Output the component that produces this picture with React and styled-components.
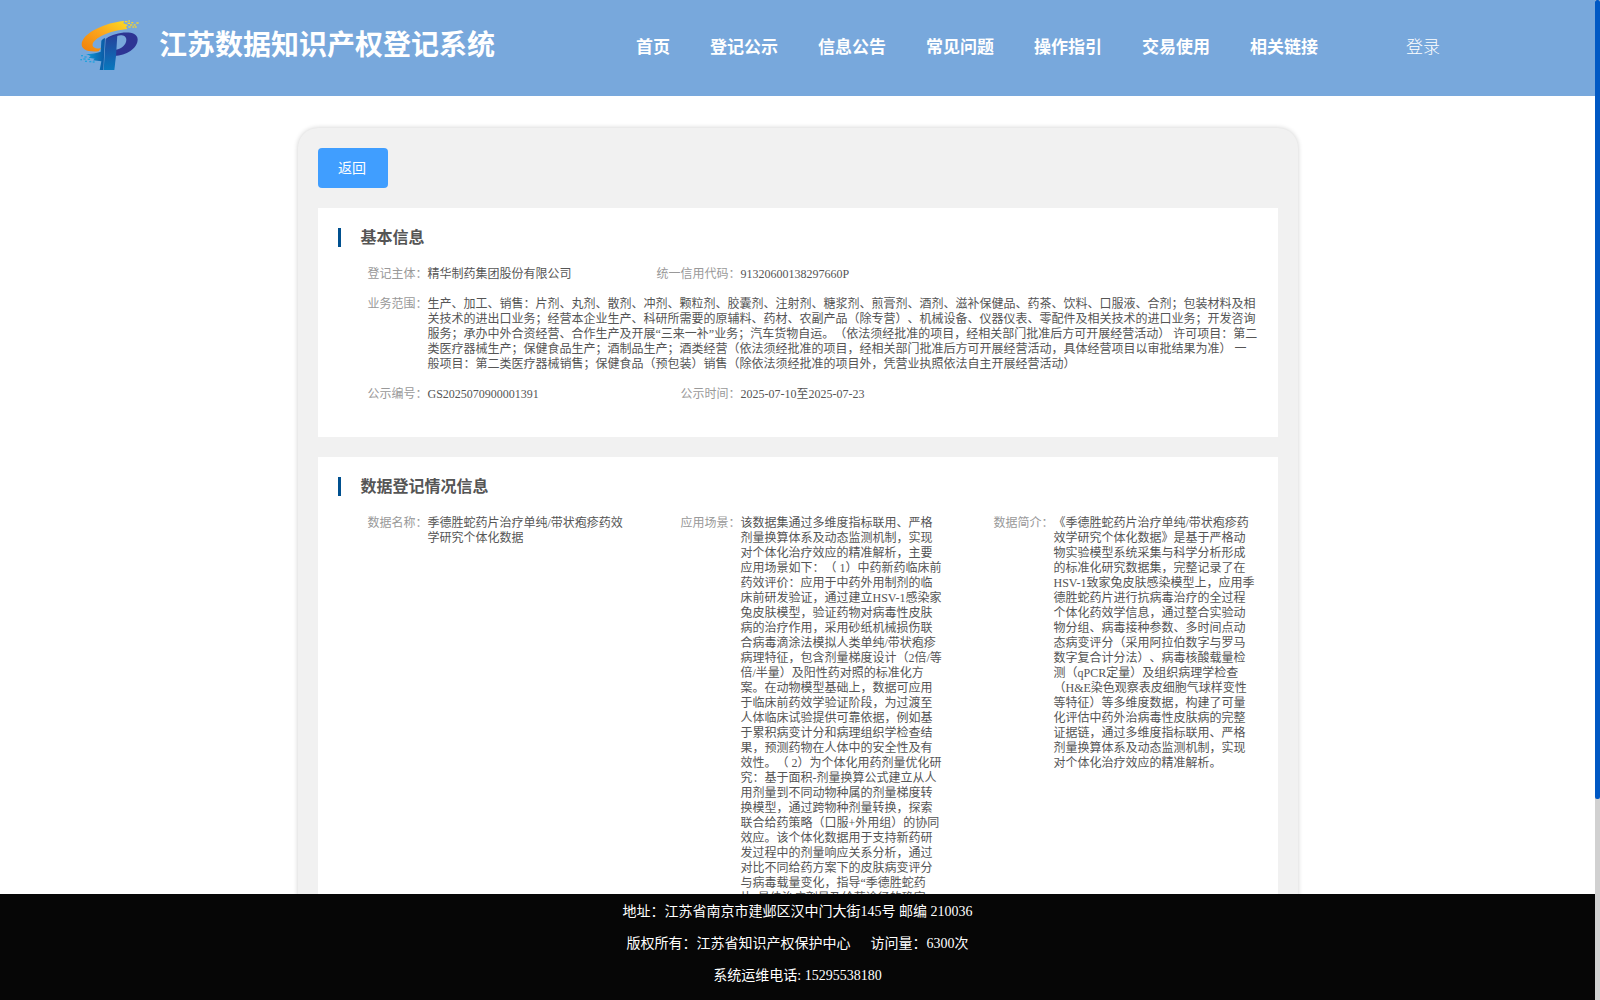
import React from "react";
import styled, { createGlobalStyle } from "styled-components";

const NAV = ["首页", "登记公示", "信息公告", "常见问题", "操作指引", "交易使用", "相关链接"];

const SCOPE = [
  "生产、加工、销售：片剂、丸剂、散剂、冲剂、颗粒剂、胶囊剂、注射剂、糖浆剂、煎膏剂、酒剂、滋补保健品、药茶、饮料、口服液、合剂；包装材料及相",
  "关技术的进出口业务；经营本企业生产、科研所需要的原辅料、药材、农副产品（除专营）、机械设备、仪器仪表、零配件及相关技术的进口业务；开发咨询",
  "服务；承办中外合资经营、合作生产及开展“三来一补”业务；汽车货物自运。（依法须经批准的项目，经相关部门批准后方可开展经营活动） 许可项目：第二",
  "类医疗器械生产；保健食品生产；酒制品生产；酒类经营（依法须经批准的项目，经相关部门批准后方可开展经营活动，具体经营项目以审批结果为准） 一",
  "般项目：第二类医疗器械销售；保健食品（预包装）销售（除依法须经批准的项目外，凭营业执照依法自主开展经营活动）",
];

const DATA_NAME = ["季德胜蛇药片治疗单纯/带状疱疹药效", "学研究个体化数据"];

const SCENE = [
  "该数据集通过多维度指标联用、严格",
  "剂量换算体系及动态监测机制，实现",
  "对个体化治疗效应的精准解析，主要",
  "应用场景如下：（ 1）中药新药临床前",
  "药效评价：应用于中药外用制剂的临",
  "床前研发验证，通过建立HSV-1感染家",
  "兔皮肤模型，验证药物对病毒性皮肤",
  "病的治疗作用，采用砂纸机械损伤联",
  "合病毒滴涂法模拟人类单纯/带状疱疹",
  "病理特征，包含剂量梯度设计（2倍/等",
  "倍/半量）及阳性药对照的标准化方",
  "案。在动物模型基础上，数据可应用",
  "于临床前药效学验证阶段，为过渡至",
  "人体临床试验提供可靠依据，例如基",
  "于累积病变计分和病理组织学检查结",
  "果，预测药物在人体中的安全性及有",
  "效性。（ 2）为个体化用药剂量优化研",
  "究：基于面积-剂量换算公式建立从人",
  "用剂量到不同动物种属的剂量梯度转",
  "换模型，通过跨物种剂量转换，探索",
  "联合给药策略（口服+外用组）的协同",
  "效应。该个体化数据用于支持新药研",
  "发过程中的剂量响应关系分析，通过",
  "对比不同给药方案下的皮肤病变评分",
  "与病毒载量变化，指导“季德胜蛇药",
  "片”最佳治疗剂量及给药途径的确定",
];

const INTRO = [
  "《季德胜蛇药片治疗单纯/带状疱疹药",
  "效学研究个体化数据》是基于严格动",
  "物实验模型系统采集与科学分析形成",
  "的标准化研究数据集，完整记录了在",
  "HSV-1致家兔皮肤感染模型上，应用季",
  "德胜蛇药片进行抗病毒治疗的全过程",
  "个体化药效学信息，通过整合实验动",
  "物分组、病毒接种参数、多时间点动",
  "态病变评分（采用阿拉伯数字与罗马",
  "数字复合计分法）、病毒核酸载量检",
  "测（qPCR定量）及组织病理学检查",
  "（H&E染色观察表皮细胞气球样变性",
  "等特征）等多维度数据，构建了可量",
  "化评估中药外治病毒性皮肤病的完整",
  "证据链，通过多维度指标联用、严格",
  "剂量换算体系及动态监测机制，实现",
  "对个体化治疗效应的精准解析。",
];

function Logo() {
  return (
    <LogoSvg viewBox="0 0 240 210">
      <defs>
        <linearGradient id="orange" x1="0" y1="1" x2="1" y2="0">
          <stop offset="0" stopColor="#f07f0a" />
          <stop offset="0.5" stopColor="#fba41c" />
          <stop offset="1" stopColor="#fbdc22" />
        </linearGradient>
        <linearGradient id="blue" x1="0" y1="0" x2="1" y2="0">
          <stop offset="0" stopColor="#0e9bd8" />
          <stop offset="1" stopColor="#0a58a4" />
        </linearGradient>
        <linearGradient id="stem" x1="0" y1="1" x2="0" y2="0">
          <stop offset="0" stopColor="#0878bd" />
          <stop offset="1" stopColor="#24429b" />
        </linearGradient>
      </defs>
      <path d="M163 33C108 37 36 69 35 103C35 119 53 127 86 124L93 115C76 117 66 112 68 102C73 85 115 62 172 57L168 50L174 45L160 40Z" fill="url(#orange)" />
      <path d="M110 85C135 66 202 57 203 88C203 116 168 137 134 138L138 119C155 116 169 104 169 89C169 77 154 73 141 78L110 93Z" fill="#2d3594" />
      <path d="M48 132C64 132 80 129 92 125L94 92Q98 86 105 84L100 180H89L94 154L69 151L74 146L56 143L62 138Z" fill="url(#blue)" />
      <path d="M107 86L142 76L138 137L133 180H101Z" fill="url(#stem)" />
      <g fill="#fbd52a">
        <rect x="165" y="33" width="7" height="4" />
        <rect x="175" y="31" width="5" height="4" />
        <rect x="173" y="38" width="7" height="4" />
        <rect x="184" y="36" width="6" height="4" />
        <rect x="180" y="43" width="7" height="4" />
        <rect x="191" y="43" width="6" height="4" />
        <rect x="199" y="37" width="7" height="4" />
        <rect x="175" y="49" width="7" height="4" />
        <rect x="187" y="49" width="6" height="4" />
        <rect x="195" y="49" width="5" height="4" />
      </g>
      <g fill="#22a3df">
        <rect x="33" y="135" width="6" height="4" />
        <rect x="43" y="139" width="7" height="4" />
        <rect x="31" y="147" width="5" height="4" />
        <rect x="40" y="145" width="7" height="4" />
        <rect x="53" y="146" width="7" height="4" />
        <rect x="45" y="152" width="6" height="4" />
        <rect x="58" y="153" width="6" height="4" />
        <rect x="68" y="154" width="6" height="4" />
      </g>
    </LogoSvg>
  );
}

function Field({ label, lines, wide }) {
  return (
    <FieldWrap $wide={wide}>
      <Label>{label}：</Label>
      <Value>
        {lines.map((line) => (
          <Line key={line}>{line}</Line>
        ))}
      </Value>
    </FieldWrap>
  );
}

export default function App() {
  return (
    <>
      <GlobalStyle />
      <Screen>
        <Main>
          <Header>
            <Logo />
            <SiteTitle>江苏数据知识产权登记系统</SiteTitle>
            <Nav>
              {NAV.map((item) => (
                <NavItem key={item}>{item}</NavItem>
              ))}
            </Nav>
            <Login>登录</Login>
          </Header>
          <Content>
            <Panel>
              <BackButton>返回</BackButton>
              <Section>
                <SectionTitle>基本信息</SectionTitle>
                <Fields>
                  <Field label="登记主体" lines={["精华制药集团股份有限公司"]} />
                  <Field label="统一信用代码" lines={["91320600138297660P"]} />
                  <Field label="业务范围" lines={SCOPE} wide />
                  <Field label="公示编号" lines={["GS2025070900001391"]} />
                  <Field label="公示时间" lines={["2025-07-10至2025-07-23"]} />
                </Fields>
              </Section>
              <Section>
                <SectionTitle>数据登记情况信息</SectionTitle>
                <Fields>
                  <Field label="数据名称" lines={DATA_NAME} />
                  <Field label="应用场景" lines={SCENE} />
                  <Field label="数据简介" lines={INTRO} />
                </Fields>
              </Section>
            </Panel>
          </Content>
          <Footer>
            <FooterLine>地址：江苏省南京市建邺区汉中门大街145号 邮编 210036</FooterLine>
            <FooterLine>
              <span>版权所有：江苏省知识产权保护中心</span>
              <span>访问量：6300次</span>
            </FooterLine>
            <FooterLine>系统运维电话: 15295538180</FooterLine>
          </Footer>
        </Main>
        <ScrollTrack>
          <ScrollThumb />
        </ScrollTrack>
      </Screen>
    </>
  );
}

const GlobalStyle = createGlobalStyle`
  * {
    box-sizing: border-box;
  }
  body {
    margin: 0;
    overflow: hidden;
    font-family: "Liberation Serif", "Noto Sans CJK SC", serif;
    text-spacing-trim: space-all;
    text-autospace: no-autospace;
  }
`;

const Screen = styled.div`
  display: flex;
  width: 1600px;
  height: 1000px;
  background: #fff;
`;

const Main = styled.div`
  display: flex;
  flex-direction: column;
  width: 1595px;
  height: 100%;
`;

const Header = styled.header`
  display: flex;
  align-items: center;
  flex-shrink: 0;
  height: 96px;
  padding-left: 70px;
  background: #78a8dc;
  color: #fff;
  white-space: nowrap;
`;

const LogoSvg = styled.svg`
  width: 80px;
  height: 70px;
  margin-bottom: 6px;
`;

const SiteTitle = styled.h1`
  width: 477px;
  margin: 0 0 4px 9px;
  font-size: 28px;
  font-weight: 600;
  line-height: 40px;
`;

const Nav = styled.nav`
  display: flex;
  gap: 40px;
`;

const NavItem = styled.a`
  font-size: 17px;
  font-weight: 600;
  line-height: 24px;
`;

const Login = styled.a`
  margin-left: 88px;
  font-size: 17px;
  font-weight: 300;
  line-height: 24px;
`;

const Content = styled.main`
  flex: 1;
  min-height: 0;
  overflow: hidden;
  padding-top: 32px;
`;

const Panel = styled.div`
  width: 1000px;
  margin: 0 auto;
  padding: 20px;
  border-radius: 20px;
  background: #f1f1f1;
  box-shadow: 0 0 5px rgba(0, 0, 0, 0.2);
`;

const BackButton = styled.button`
  display: block;
  width: 70px;
  height: 40px;
  padding: 0 1px 3px 0;
  border: none;
  border-radius: 4px;
  background: #409eff;
  color: #fff;
  font-family: inherit;
  font-size: 14px;
`;

const Section = styled.section`
  margin-top: 20px;
  padding: 20px 0 35px 20px;
  background: #fff;
`;

const SectionTitle = styled.h2`
  height: 19px;
  margin: 0 0 20px;
  padding-left: 20px;
  border-left: 3px solid #00508f;
  color: #555;
  font-size: 16px;
  font-weight: 700;
  line-height: 20px;
`;

const Fields = styled.div`
  display: grid;
  grid-template-columns: repeat(3, 313px);
  row-gap: 15px;
`;

const FieldWrap = styled.div`
  display: flex;
  grid-column: ${(props) => (props.$wide ? "1 / -1" : "auto")};
  font-size: 12px;
  line-height: 15px;

  /* the first block keeps two fields per row */
  &:nth-child(4) {
    grid-column-start: 1;
  }
`;

const Label = styled.div`
  flex: 0 0 90px;
  text-align: right;
  color: #999;
`;

const Value = styled.div`
  color: #555;
`;

const Line = styled.div`
  height: 15px;
  white-space: nowrap;
`;

const Footer = styled.footer`
  flex-shrink: 0;
  height: 106px;
  padding-top: 2px;
  background: #060606;
  color: #fff;
`;

const FooterLine = styled.div`
  display: flex;
  justify-content: center;
  gap: 20px;
  height: 32px;
  font-size: 14px;
  line-height: 32px;
`;

const ScrollTrack = styled.div`
  width: 5px;
  height: 100%;
  background: #d1d1d1;
`;

const ScrollThumb = styled.div`
  height: 799px;
  border-radius: 2px;
  background: #0058c4;
`;
